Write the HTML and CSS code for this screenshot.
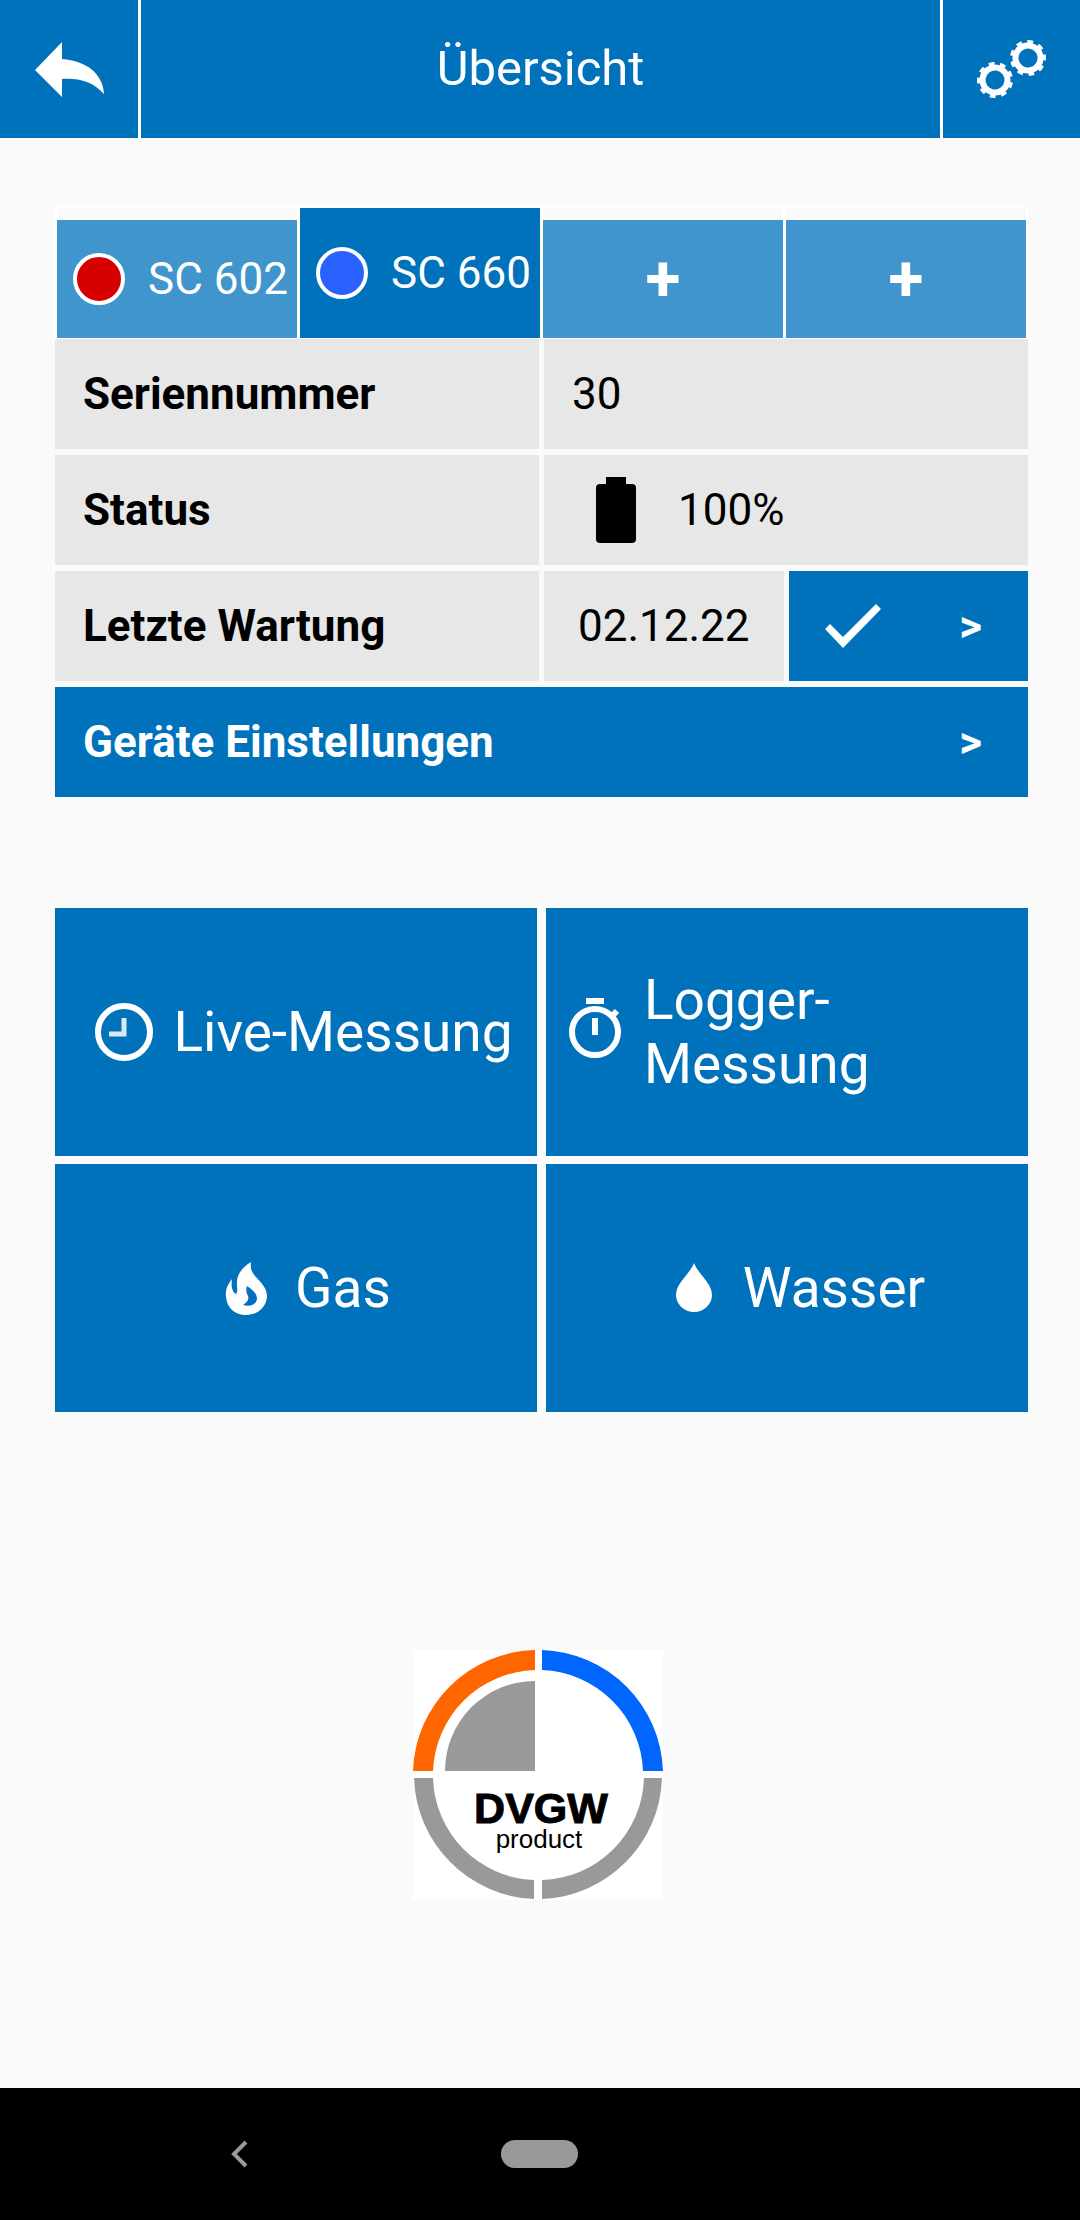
FILE: index.html
```
<!DOCTYPE html>
<html lang="de">
    <head>
        <meta charset="utf-8">
        <meta name="viewport" content="width=device-width, initial-scale=1">
        <title>Übersicht</title>
        <link rel="stylesheet" href="styles.css">
    </head>
    <body>
        <header class="topbar">
            <button class="topbar-btn" type="button" aria-label="Zurück">
                <svg width="69" height="55" viewBox="0 0 69 55">
                    <path fill="#fff" d="M0 28L27 0V17C52 19 68 32 69 52C58 40 45 36 27 37V55Z"/>
                </svg>
            </button>
            <h1 class="title">Übersicht</h1>
            <button class="topbar-btn" type="button" aria-label="Einstellungen">
                <svg width="70" height="60" viewBox="0 0 70 60" fill="none" stroke="#fff">
                    <g transform="translate(18 41) rotate(8)">
                        <circle r="12.5" stroke-width="6"/>
                        <circle r="16" stroke-width="4" pathLength="18" stroke-dasharray="1 1"/>
                    </g>
                    <g transform="translate(51 19) rotate(-12)">
                        <circle r="12.5" stroke-width="6"/>
                        <circle r="16" stroke-width="4" pathLength="18" stroke-dasharray="1 1"/>
                    </g>
                </svg>
            </button>
        </header>

        <main>
            <nav class="tabs">
                <button class="tab" type="button"><span class="dot red"></span>SC 602</button>
                <button class="tab active" type="button"><span class="dot blue"></span>SC 660</button>
                <button class="tab add" type="button">+</button>
                <button class="tab add" type="button">+</button>
            </nav>

            <div class="device">
                <table class="info">
                    <tr>
                        <th colspan="2" scope="row">Seriennummer</th>
                        <td colspan="2">30</td>
                    </tr>
                    <tr>
                        <th colspan="2" scope="row">Status</th>
                        <td colspan="2">
                            <div class="battery">
                                <svg width="40" height="66" viewBox="0 0 40 66">
                                    <rect x="10" width="20" height="12"/>
                                    <rect y="7" width="40" height="59" rx="4"/>
                                </svg>
                                100%
                            </div>
                        </td>
                    </tr>
                    <tr>
                        <th colspan="2" scope="row">Letzte Wartung</th>
                        <td class="date">02.12.22</td>
                        <td class="action">
                            <button class="check" type="button" aria-label="Wartung">
                                <svg width="57" height="44" viewBox="0 0 57 44">
                                    <path fill="#fff" d="M0 25L5 20L18 33L51 0L56 5L18 44Z"/>
                                </svg>
                                <span>&gt;</span>
                            </button>
                        </td>
                    </tr>
                </table>
                <button class="settings" type="button">Geräte Einstellungen<span>&gt;</span></button>
            </div>

            <div class="tiles">
                <button class="tile" type="button">
                    <svg class="icon" viewBox="0 0 90 90" fill="none" stroke="#fff">
                        <circle cx="45" cy="45" r="26" stroke-width="6"/>
                        <path d="M45 31V47H30" stroke-width="5" opacity="0.85"/>
                    </svg>
                    <span>Live-Messung</span>
                </button>
                <button class="tile" type="button">
                    <svg class="icon" viewBox="0 0 90 90" fill="none" stroke="#fff" stroke-width="6">
                        <circle cx="45" cy="45" r="23"/>
                        <path d="M36 14H54M45 31V48M61 30L67 24"/>
                    </svg>
                    <span>Logger-Messung</span>
                </button>
                <button class="tile" type="button">
                    <svg class="icon" viewBox="0 0 90 90">
                        <path transform="translate(15 13)" fill="#fff" fill-rule="evenodd" d="M35 6C25 12 20 20 21 29C21 33 22 35 20 38C16 36 15 30 16 23C11 29 9 35 10 41C11 52 19 59 30 59C42 59 50 51 51 41C51 32 46 28 41 22C36 17 34 13 35 6ZM31 30C38 35 41 38 41 43C40 49 34 51 27 49C32 46 34 42 31 38C30 35 30 33 31 30Z"/>
                    </svg>
                    <span>Gas</span>
                </button>
                <button class="tile" type="button">
                    <svg class="icon" viewBox="0 0 90 90">
                        <path fill="#fff" d="M45 20C41 31 27 40 27 52A18 17 0 0 0 63 52C63 40 49 31 45 20Z"/>
                    </svg>
                    <span>Wasser</span>
                </button>
            </div>
        </main>

        <section class="cert">
            <svg width="250" height="250" viewBox="0 0 250 250" role="img" aria-label="DVGW product">
                <rect width="250" height="250" fill="#fff"/>
                <path fill="#f60" d="M0 121A125 125 0 0 1 122 0V20A105 105 0 0 0 20 121Z"/>
                <path fill="#06f" d="M129 0A125 125 0 0 1 250 121H230A105 105 0 0 0 129 20Z"/>
                <path fill="#999" d="M1 128A125 125 0 0 0 121 249V230A105 105 0 0 1 20 128Z"/>
                <path fill="#999" d="M249 128A125 125 0 0 1 129 249V230A105 105 0 0 0 231 128Z"/>
                <path fill="#999" d="M32 121A90 90 0 0 1 122 31V121Z"/>
                <text class="dvgw" x="128" y="173">DVGW</text>
                <text class="product" x="126" y="198">product</text>
            </svg>
        </section>

        <footer class="navbar">
            <button type="button" aria-label="Zurück">
                <svg width="18" height="28" viewBox="0 0 18 28">
                    <path fill="none" stroke="#999" stroke-width="4" d="M16 2L4 14L16 26"/>
                </svg>
            </button>
            <button type="button" aria-label="Startseite"><span class="pill"></span></button>
        </footer>
    </body>
</html>
```
FILE: styles.css
```
* {
    box-sizing: border-box;
}
body {
    margin: 0;
    min-height: 100vh;
    display: flex;
    flex-direction: column;
    background-color: #fafafa;
    color: black;
    font-family: Roboto, sans-serif;
    font-size: 44px;
}
button {
    border: 0;
    margin: 0;
    padding: 0;
    border-radius: 0;
    background-color: #0072bc;
    color: white;
    font: inherit;
    cursor: pointer;
}
svg {
    display: block;
    flex-shrink: 0;
}

/* top bar */
.topbar {
    display: grid;
    grid-template-columns: 138px 1fr 137px;
    gap: 3px;
    height: 138px;
    background-color: white;
}
.topbar-btn {
    display: flex;
    align-items: center;
    justify-content: center;
}
.title {
    margin: 0;
    background-color: #0072bc;
    color: white;
    font-size: 49px;
    font-weight: normal;
    line-height: 138px;
    text-align: center;
}

main {
    padding: 69px 52px 0 55px;
}

/* device tabs */
.tabs {
    display: grid;
    grid-template-columns: repeat(4, minmax(0, 1fr));
    gap: 3px;
    padding: 1px 2px;
    background-color: white;
}
.tab {
    height: 130px;
    display: flex;
    align-items: center;
    gap: 23px;
    padding-left: 16px;
    border-top: 12px solid #fafafa;
    background-color: #4095cd;
    white-space: nowrap;
}
.tab.active {
    border-top: 0;
    background-color: #0072bc;
}
.tab.add {
    justify-content: center;
    padding: 0;
    font-size: 64px;
    font-weight: bold;
}
.dot {
    width: 52px;
    height: 52px;
    flex-shrink: 0;
    border: 4px solid white;
    border-radius: 50%;
}
.red {
    background-color: #d60000;
}
.blue {
    background-color: #2962ff;
}

/* device data */
.device {
    display: flex;
    flex-direction: column;
}
.info {
    width: calc(100% + 10px);
    margin: -6px -5px 0;
    table-layout: fixed;
    border-collapse: separate;
    border-spacing: 5px 6px;
}
.info th, .info td {
    height: 110px;
    padding: 0 28px;
    background-color: #e7e7e7;
    text-align: left;
}
.info .date {
    padding: 0;
    text-align: center;
}
.info .action {
    padding: 0;
}
.battery {
    display: flex;
    align-items: center;
    gap: 42px;
    padding-left: 24px;
}
.check, .settings {
    display: flex;
    align-items: center;
    justify-content: space-between;
    width: 100%;
    height: 110px;
    font-weight: bold;
}
.check {
    padding: 0 46px 0 36px;
}
.settings {
    padding: 0 46px 0 28px;
}

/* menu */
.tiles {
    display: grid;
    grid-template-columns: 1fr 1fr;
    gap: 8px 9px;
    margin-top: 111px;
}
.tile {
    display: flex;
    align-items: center;
    justify-content: center;
    gap: 4px;
    height: 248px;
    padding: 0 4px;
    font-size: 55px;
    line-height: 64px;
    text-align: left;
}
.icon {
    width: 90px;
    height: 90px;
}

.cert {
    display: flex;
    justify-content: center;
    padding: 238px 56px 64px 52px;
}
.dvgw, .product {
    font-family: "Liberation Sans", Arial, sans-serif;
    text-anchor: middle;
}
.dvgw {
    font-size: 43px;
    font-weight: bold;
    stroke: black;
    stroke-width: 1px;
}
.product {
    font-size: 26px;
}

/* system navigation */
.navbar {
    display: grid;
    grid-template-columns: 1fr 1fr 1fr;
    height: 132px;
    margin-top: auto;
    padding: 0 88px;
    background-color: black;
}
.navbar button {
    display: flex;
    align-items: center;
    justify-content: center;
    background-color: black;
}
.pill {
    width: 77px;
    height: 28px;
    border-radius: 14px;
    background-color: #999;
}
```
